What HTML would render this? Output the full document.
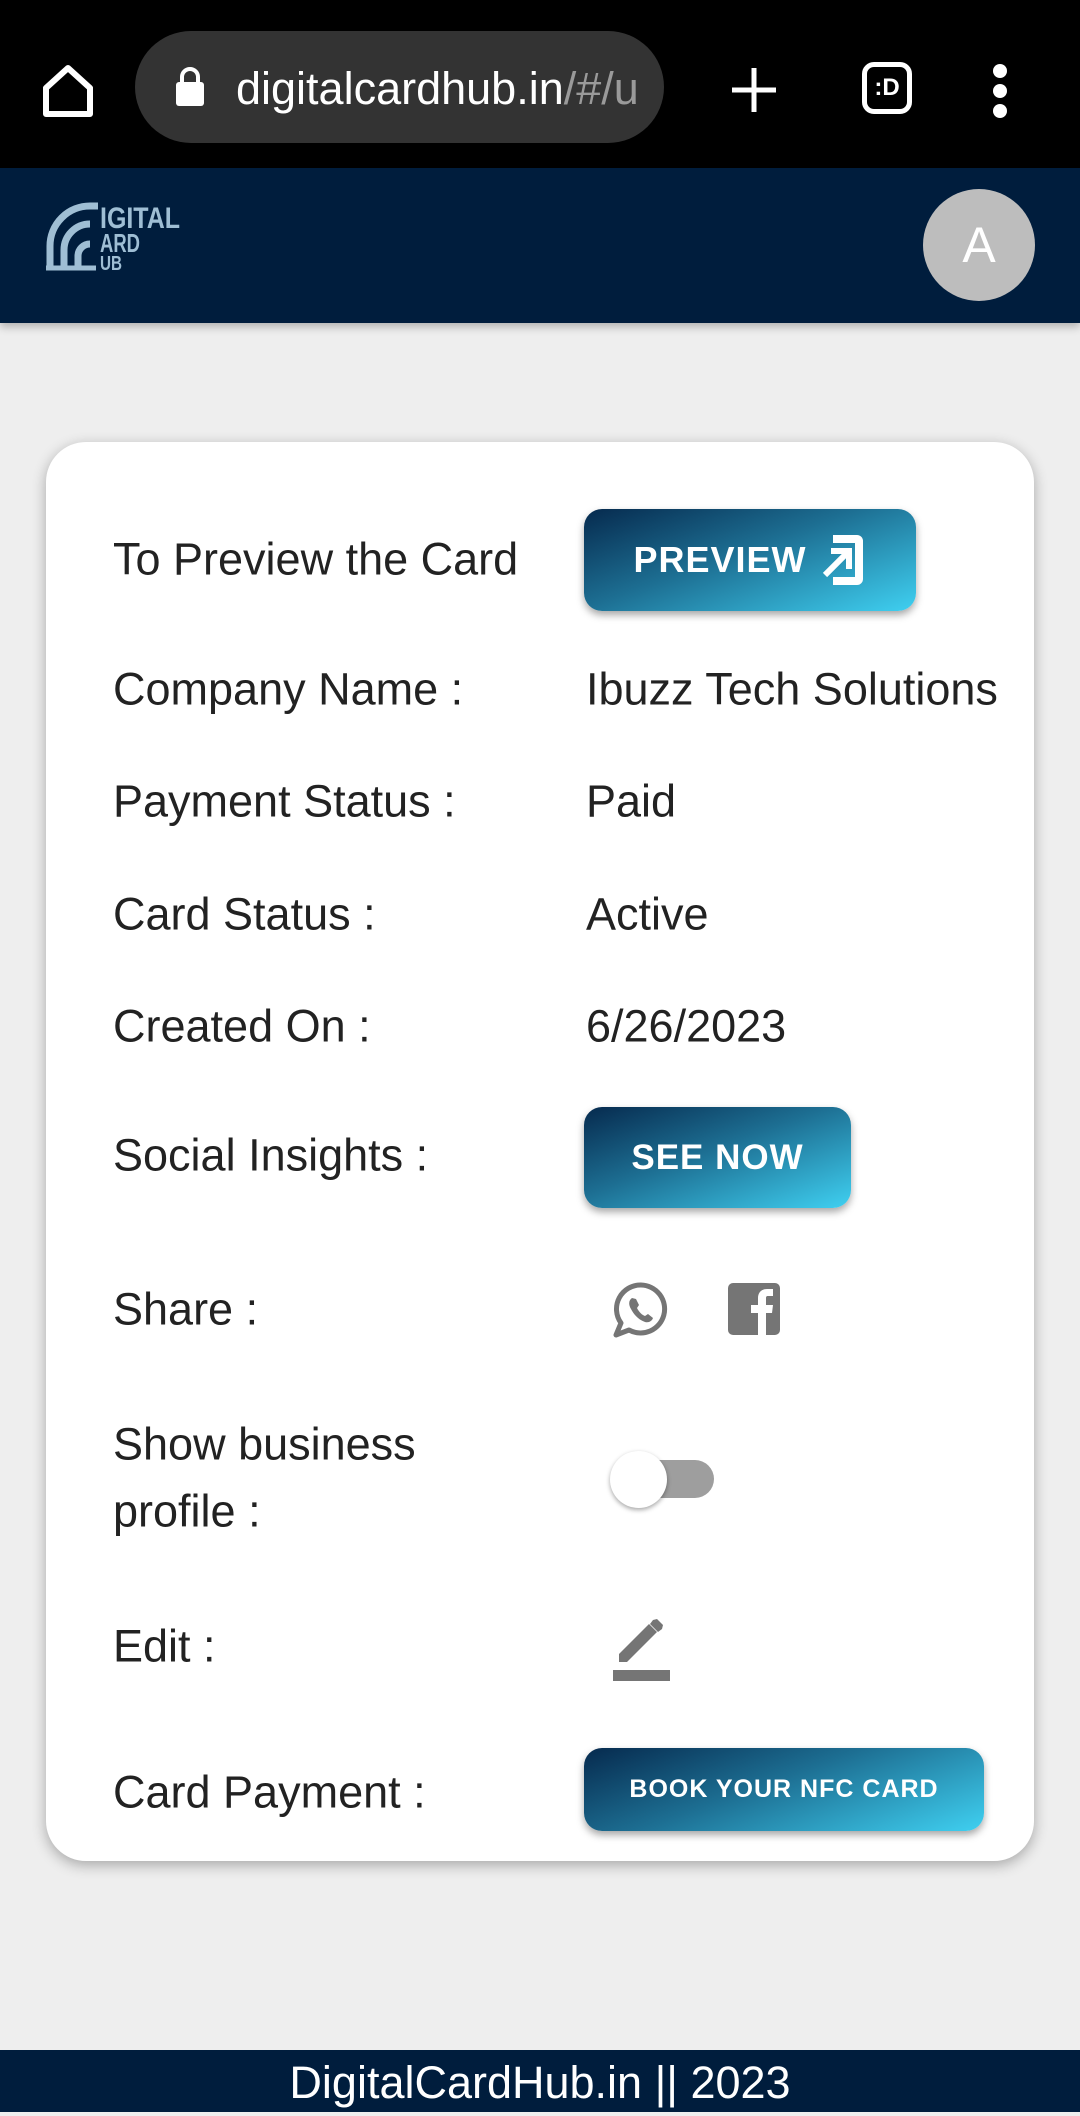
<!DOCTYPE html>
<html><head><meta charset="utf-8"><style>
*{margin:0;padding:0;box-sizing:border-box}
body{width:1080px;height:2112px;background:#eeeeee;font-family:"Liberation Sans",Roboto,sans-serif;position:relative;overflow:hidden;color:#222}
.top{position:absolute;left:0;top:0;width:1080px;height:168px;background:#000}
.pill{position:absolute;left:135px;top:31px;width:529px;height:112px;border-radius:56px;background:#333;overflow:hidden}
.hdr{position:absolute;left:0;top:168px;width:1080px;height:155px;background:#001d3d;box-shadow:0 4px 8px rgba(0,0,0,.25)}
.av{position:absolute;left:923px;top:21px;width:112px;height:112px;border-radius:50%;background:#bdbdbd;color:#fff;font-size:50px;text-align:center;line-height:112px}
.card{position:absolute;left:46px;top:442px;width:988px;height:1419px;background:#fff;border-radius:40px;box-shadow:0 4px 14px rgba(0,0,0,.3)}
.t{position:absolute;font-size:45px;color:#222;line-height:1;transform:translateY(-50%);white-space:nowrap}
.btn{position:absolute;border-radius:18px;background:linear-gradient(160deg,#062a4e 0%,#1d6f93 45%,#3fd0f1 100%);color:#fff;font-weight:bold;box-shadow:0 4px 8px rgba(0,0,0,.35);display:flex;align-items:center;justify-content:center;letter-spacing:1px}
.ft{position:absolute;left:0;top:2050px;width:1080px;height:62px;background:#001d3d;color:#fff;font-size:45px;text-align:center;line-height:66px}
</style></head><body>
<div class="top">
<svg style="position:absolute;left:42px;top:64px" width="52" height="54" viewBox="0 0 52 54"><path d="M4 24 L26 4 L48 24 V50 H4 Z" fill="none" stroke="#fff" stroke-width="6" stroke-linejoin="round"/></svg>
<div class="pill">
<svg style="position:absolute;left:39px;top:36px" width="32" height="40" viewBox="0 0 32 40"><path d="M8 16 V10 a8 8 0 0 1 16 0 V16" fill="none" stroke="#fff" stroke-width="4"/><rect x="2" y="15" width="28" height="24" rx="3" fill="#fff"/></svg>
<div style="position:absolute;left:101px;top:32px;font-size:45px;color:#fff;white-space:nowrap">digitalcardhub.in<span style="color:#9a9a9a">/#/u</span></div>
</div>
<svg style="position:absolute;left:730px;top:66px" width="48" height="48"><path d="M24 2V46M2 24H46" stroke="#fff" stroke-width="5"/></svg>
<div style="position:absolute;left:862px;top:62px;width:50px;height:52px;border:5px solid #fff;border-radius:12px;color:#fff;font-size:24px;font-weight:bold;text-align:center;line-height:42px">:D</div>
<div style="position:absolute;left:993px;top:64px;width:14px;height:14px;border-radius:50%;background:#fff;box-shadow:0 20px 0 #fff,0 40px 0 #fff"></div>
</div>
<div class="hdr">
<svg style="position:absolute;left:46px;top:30px" width="140" height="80" viewBox="0 0 140 80">
<g fill="none" stroke="#9fbed4" stroke-width="7"><path d="M4 72 V48 a40 40 0 0 1 40 -40 h8"/><path d="M18 72 V52 a26 26 0 0 1 26 -26"/><path d="M32 72 V58 a12 12 0 0 1 12 -12"/></g>
<path d="M0 70 H50" stroke="#9fbed4" stroke-width="5"/>
<text x="54" y="30" fill="#9fbed4" font-size="30" font-weight="bold" font-family="Liberation Sans Narrow,Liberation Sans" textLength="80" lengthAdjust="spacingAndGlyphs">IGITAL</text>
<text x="54" y="54" fill="#9fbed4" font-size="26" font-weight="bold" font-family="Liberation Sans Narrow,Liberation Sans" textLength="40" lengthAdjust="spacingAndGlyphs">ARD</text>
<text x="54" y="72" fill="#9fbed4" font-size="20" font-weight="bold" font-family="Liberation Sans Narrow,Liberation Sans" textLength="22" lengthAdjust="spacingAndGlyphs">UB</text>
</svg>
<div class="av">A</div>
</div>
<div class="card"></div>
<div class="t" style="left:113px;top:559px">To Preview the Card</div>
<div class="btn" style="left:584px;top:509px;width:332px;height:102px;font-size:36px">PREVIEW<svg style="margin-left:12px" width="48" height="58" viewBox="0 0 48 58"><path d="M14 4 H38 a6 6 0 0 1 6 6 V48 a6 6 0 0 1 -6 6 H14 V46 H36 V12 H14 Z" fill="#fff"/><path d="M6 44 L28 22 M12 20 H30 V38" fill="none" stroke="#fff" stroke-width="6"/></svg></div>
<div class="t" style="left:113px;top:689px">Company Name :</div><div class="t" style="left:586px;top:689px">Ibuzz Tech Solutions</div>
<div class="t" style="left:113px;top:801px">Payment Status :</div><div class="t" style="left:586px;top:801px">Paid</div>
<div class="t" style="left:113px;top:914px">Card Status :</div><div class="t" style="left:586px;top:914px">Active</div>
<div class="t" style="left:113px;top:1026px">Created On :</div><div class="t" style="left:586px;top:1026px">6/26/2023</div>
<div class="t" style="left:113px;top:1155px">Social Insights :</div>
<div class="btn" style="left:584px;top:1107px;width:267px;height:101px;font-size:35px">SEE NOW</div>
<div class="t" style="left:113px;top:1309px">Share :</div>
<svg style="position:absolute;left:612px;top:1281px" width="58" height="58" viewBox="0 0 58 58"><path d="M29 4 a24 24 0 1 1 -12 45 L4 54 L9 42 A24 24 0 0 1 29 4 Z" fill="none" stroke="#757575" stroke-width="5" stroke-linejoin="round"/><path d="M20 17 c-3 2 -4 6 -1 11 c3 6 8 11 14 13 c4 1 7 -1 8 -4 l-5 -4 l-3 2 c-3 -1 -6 -4 -8 -8 l2 -3 l-3 -6 z" fill="#757575"/></svg>
<svg style="position:absolute;left:728px;top:1283px" width="52" height="52" viewBox="0 0 52 52"><rect x="0" y="0" width="52" height="52" rx="5" fill="#757575"/><path d="M30 52 V30 H23 V22 H30 V15 c0-6 4-9 9-9 h6 v7 h-5 c-2 0-2 1-2 3 v6 h7 l-1 8 h-6 v22 z" fill="#fff"/></svg>
<div class="t" style="left:113px;top:1444px">Show business</div>
<div class="t" style="left:113px;top:1511px">profile :</div>
<div style="position:absolute;left:613px;top:1460px;width:101px;height:38px;border-radius:19px;background:#9e9e9e"></div>
<div style="position:absolute;left:610px;top:1451px;width:57px;height:57px;border-radius:50%;background:#fff;box-shadow:0 2px 5px rgba(0,0,0,.35)"></div>
<div class="t" style="left:113px;top:1646px">Edit :</div>
<svg style="position:absolute;left:613px;top:1618px" width="58" height="64" viewBox="0 0 58 64"><path d="M6 36 L36 6 l8 8 L14 44 H6 Z" fill="#757575"/><path d="M40 2 l4 -1 l6 6 l-1 4 l-4 3 l-8 -8 z" fill="#757575"/><rect x="0" y="52" width="57" height="11" fill="#757575"/></svg>
<div class="t" style="left:113px;top:1792px">Card Payment :</div>
<div class="btn" style="left:584px;top:1748px;width:400px;height:83px;font-size:25px">BOOK YOUR NFC CARD</div>
<div class="ft">DigitalCardHub.in || 2023</div>
</body></html>
